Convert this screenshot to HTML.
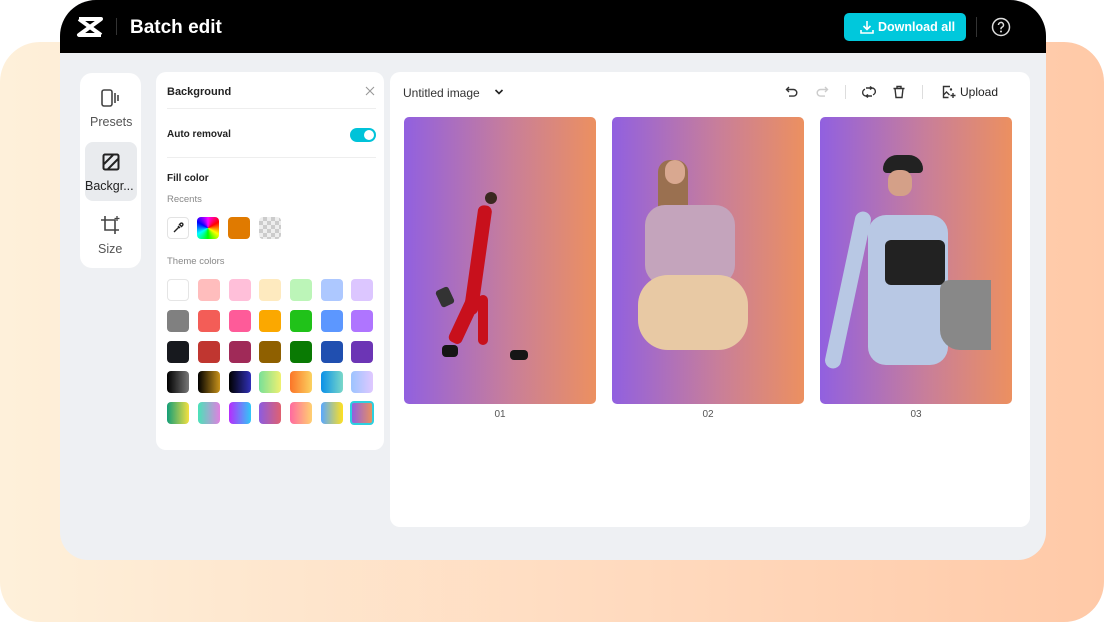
<!DOCTYPE html><html><head><meta charset="utf-8"><style>
*{margin:0;padding:0;box-sizing:border-box}
body{width:1104px;height:622px;background:#fff;position:relative;overflow:hidden;font-family:"Liberation Sans",sans-serif}
.bg{position:absolute;left:0;top:42px;width:1104px;height:580px;border-radius:40px;background:linear-gradient(90deg,#fef0da,#ffd9bd 60%,#ffc9a7)}
.win{position:absolute;left:60px;top:0;width:986px;height:560px;border-radius:36px 36px 28px 28px;background:#eef0f3;overflow:hidden}
.hd{position:absolute;left:0;top:0;width:986px;height:53px;background:#000}
.abs{position:absolute}
.card{position:absolute;background:#fff;border-radius:10px}
.t{position:absolute;white-space:nowrap}
.sw{position:absolute;width:22px;height:22px;border-radius:4px}
.img{position:absolute;top:117px;width:192px;height:287px;border-radius:5px;background:linear-gradient(90deg,#9160e0,#c87e9a 55%,#ec9060)}
.lab{position:absolute;top:409px;font-size:10px;color:#555;width:192px;text-align:center}
</style></head><body>
<div class="bg"></div>
<div class="win">
 <div class="hd">
  <svg class="abs" style="left:16px;top:16px" width="28" height="22" viewBox="0 0 28 22"><path d="M3 3h22L3 19h22" fill="none" stroke="#fff" stroke-width="4" stroke-linejoin="round"/><path d="M3 3l22 16" stroke="#fff" stroke-width="4"/></svg>
  <div class="abs" style="left:56px;top:18px;width:1px;height:17px;background:#333"></div>
  <div class="t" style="left:70px;top:17px;color:#fff;font-size:19px;font-weight:bold">Batch edit</div>
  <div class="abs" style="left:784px;top:13px;width:122px;height:28px;border-radius:5px;background:#00c8dc"></div>
  <svg class="abs" style="left:800px;top:20px" width="14" height="14" viewBox="0 0 14 14"><path d="M7 1v8M3.5 6L7 9.5 10.5 6M1 10v3h12v-3" fill="none" stroke="#fff" stroke-width="1.6"/></svg>
  <div class="t" style="left:818px;top:20px;color:#fff;font-size:12.5px;font-weight:bold">Download all</div>
  <div class="abs" style="left:916px;top:17px;width:1px;height:20px;background:#333"></div>
  <svg class="abs" style="left:931px;top:17px" width="20" height="20" viewBox="0 0 20 20"><circle cx="10" cy="10" r="8.5" fill="none" stroke="#ddd" stroke-width="1.5"/><path d="M7.5 8a2.5 2.5 0 1 1 3.3 2.3c-.6.3-.8.7-.8 1.4v.6" fill="none" stroke="#ddd" stroke-width="1.5"/><circle cx="10" cy="14.5" r="1" fill="#ddd"/></svg>
 </div>
 <div class="card" style="left:20px;top:73px;width:61px;height:195px;border-radius:12px"></div>
 <div class="abs" style="left:25px;top:142px;width:52px;height:59px;border-radius:8px;background:#e9ebee"></div>
 <svg class="abs" style="left:40px;top:88px" width="22" height="20" viewBox="0 0 22 20"><rect x="2" y="2" width="10" height="16" rx="2" fill="none" stroke="#444" stroke-width="1.6"/><path d="M15 5v10M18 7v6" stroke="#444" stroke-width="1.6"/></svg>
 <div class="t" style="left:30px;top:115px;font-size:12.5px;color:#555">Presets</div>
 <svg class="abs" style="left:42px;top:153px" width="18" height="18" viewBox="0 0 18 18"><rect x="1.5" y="1.5" width="15" height="15" rx="1.5" fill="none" stroke="#222" stroke-width="2"/><path d="M2 11L11 2M6 16L16 6" stroke="#222" stroke-width="2"/></svg>
 <div class="t" style="left:25px;top:179px;font-size:12.5px;color:#222">Backgr...</div>
 <svg class="abs" style="left:40px;top:215px" width="22" height="20" viewBox="0 0 22 20"><path d="M5 1v14h14M1 5h14v14" fill="none" stroke="#444" stroke-width="1.6"/><path d="M17 1v5M14.5 3.5h5" stroke="#444" stroke-width="1.3"/></svg>
 <div class="t" style="left:38px;top:242px;font-size:12.5px;color:#555">Size</div>
 <div class="card" style="left:96px;top:72px;width:228px;height:378px"></div>
 <div class="t" style="left:107px;top:86px;font-size:11px;font-weight:bold;color:#222">Background</div>
 <svg class="abs" style="left:305px;top:86px" width="10" height="10" viewBox="0 0 10 10"><path d="M1 1l8 8M9 1L1 9" stroke="#999" stroke-width="1.1"/></svg>
 <div class="abs" style="left:107px;top:108px;width:209px;height:1px;background:#eee"></div>
 <div class="t" style="left:107px;top:129px;font-size:10px;font-weight:bold;color:#222">Auto removal</div>
 <div class="abs" style="left:290px;top:128px;width:26px;height:14px;border-radius:7px;background:#00c3d9"></div>
 <div class="abs" style="left:304px;top:130px;width:10px;height:10px;border-radius:5px;background:#fff"></div>
 <div class="abs" style="left:107px;top:157px;width:209px;height:1px;background:#eee"></div>
 <div class="t" style="left:107px;top:173px;font-size:10px;font-weight:bold;color:#222">Fill color</div>
 <div class="t" style="left:107px;top:194px;font-size:9.5px;color:#888">Recents</div>
 <div class="sw" style="left:107px;top:217px;border:1px solid #e3e3e3;background:#fff"></div>
 <svg class="abs" style="left:112px;top:222px" width="12" height="12" viewBox="0 0 12 12"><path d="M2 10l5-5M6 4l2 2M7.5 2.5l2 2 1-1a1.4 1.4 0 0 0-2-2z" fill="none" stroke="#222" stroke-width="1.4"/></svg>
 <div class="sw" style="left:137px;top:217px;background:conic-gradient(#f0f,#f00,#ff0,#0f0,#0ff,#00f,#f0f)"></div>
 <div class="sw" style="left:168px;top:217px;background:#e07a00"></div>
 <div class="sw" style="left:199px;top:217px;background:repeating-conic-gradient(#ccc 0 25%,#eee 0 50%) 0 0/8px 8px"></div>
 <div class="t" style="left:107px;top:256px;font-size:9.5px;color:#888">Theme colors</div>
 <div class="sw" style="left:107px;top:279px;background:#fff;border:1px solid #e5e5e5"></div>
 <div class="sw" style="left:138px;top:279px;background:#ffbdbd"></div>
 <div class="sw" style="left:169px;top:279px;background:#ffbfd9"></div>
 <div class="sw" style="left:199px;top:279px;background:#feeabf"></div>
 <div class="sw" style="left:230px;top:279px;background:#bcf5b8"></div>
 <div class="sw" style="left:261px;top:279px;background:#adc8ff"></div>
 <div class="sw" style="left:291px;top:279px;background:#dcc6ff"></div>
 <div class="sw" style="left:107px;top:310px;background:#808080"></div>
 <div class="sw" style="left:138px;top:310px;background:#f35d57"></div>
 <div class="sw" style="left:169px;top:310px;background:#fe5b99"></div>
 <div class="sw" style="left:199px;top:310px;background:#fba800"></div>
 <div class="sw" style="left:230px;top:310px;background:#20c219"></div>
 <div class="sw" style="left:261px;top:310px;background:#5c97ff"></div>
 <div class="sw" style="left:291px;top:310px;background:#af75ff"></div>
 <div class="sw" style="left:107px;top:341px;background:#17191e"></div>
 <div class="sw" style="left:138px;top:341px;background:#c03630"></div>
 <div class="sw" style="left:169px;top:341px;background:#a02a58"></div>
 <div class="sw" style="left:199px;top:341px;background:#8f6000"></div>
 <div class="sw" style="left:230px;top:341px;background:#097a03"></div>
 <div class="sw" style="left:261px;top:341px;background:#204fb0"></div>
 <div class="sw" style="left:291px;top:341px;background:#6c35b5"></div>
 <div class="sw" style="left:107px;top:371px;background:linear-gradient(90deg,#000,#777)"></div>
 <div class="sw" style="left:138px;top:371px;background:linear-gradient(90deg,#000,#c8921a)"></div>
 <div class="sw" style="left:169px;top:371px;background:linear-gradient(90deg,#000,#3030b8)"></div>
 <div class="sw" style="left:199px;top:371px;background:linear-gradient(90deg,#78e098,#f0f070)"></div>
 <div class="sw" style="left:230px;top:371px;background:linear-gradient(90deg,#fb7528,#fbd260)"></div>
 <div class="sw" style="left:261px;top:371px;background:linear-gradient(90deg,#0a90e8,#7ad8c8)"></div>
 <div class="sw" style="left:291px;top:371px;background:linear-gradient(90deg,#9cc4ff,#e0c8ff)"></div>
 <div class="sw" style="left:107px;top:402px;background:linear-gradient(90deg,#149e78,#f4e040)"></div>
 <div class="sw" style="left:138px;top:402px;background:linear-gradient(90deg,#4ae2b8,#e080e0)"></div>
 <div class="sw" style="left:169px;top:402px;background:linear-gradient(90deg,#b62cfc,#30c8f8)"></div>
 <div class="sw" style="left:199px;top:402px;background:linear-gradient(90deg,#8c5ce0,#e06070)"></div>
 <div class="sw" style="left:230px;top:402px;background:linear-gradient(90deg,#ff6aa0,#ffd070)"></div>
 <div class="sw" style="left:261px;top:402px;background:linear-gradient(90deg,#58a8ff,#ffe020)"></div>
 <div class="sw" style="left:290px;top:401px;width:24px;height:24px;border:2px solid #2cd0e0;background:linear-gradient(90deg,#9060e0,#e89060)"></div>
 <div class="card" style="left:330px;top:72px;width:640px;height:455px"></div>
 <div class="t" style="left:343px;top:86px;font-size:12px;color:#333">Untitled image</div>
 <svg class="abs" style="left:434px;top:88px" width="10" height="8" viewBox="0 0 10 8"><path d="M1.5 2l3.5 3.5L8.5 2" fill="none" stroke="#222" stroke-width="1.6"/></svg>
 <svg class="abs" style="left:725px;top:85px" width="14" height="14" viewBox="0 0 14 14"><path d="M4 2L1.5 4.5 4 7M1.5 4.5h7a3.3 3.3 0 0 1 0 6.6H4" fill="none" stroke="#333" stroke-width="1.4"/></svg>
 <svg class="abs" style="left:755px;top:85px" width="14" height="14" viewBox="0 0 14 14"><path d="M10 2l2.5 2.5L10 7M12.5 4.5h-7a3.3 3.3 0 0 0 0 6.6H10" fill="none" stroke="#ccc" stroke-width="1.4"/></svg>
 <div class="abs" style="left:785px;top:85px;width:1px;height:14px;background:#ddd"></div>
 <svg class="abs" style="left:801px;top:85px" width="16" height="14" viewBox="0 0 16 14"><path d="M5 3h6a3.5 3.5 0 0 1 1 6.8M11 11H5a3.5 3.5 0 0 1-1-6.8M9 1.5l2 1.5-2 1.5M7 9.5L5 11l2 1.5" fill="none" stroke="#333" stroke-width="1.4"/></svg>
 <svg class="abs" style="left:832px;top:85px" width="14" height="14" viewBox="0 0 14 14"><path d="M1.5 3.5h11M5 3.5V1.5h4v2M3 3.5l1 9h6l1-9" fill="none" stroke="#333" stroke-width="1.4"/></svg>
 <div class="abs" style="left:862px;top:85px;width:1px;height:14px;background:#ddd"></div>
 <svg class="abs" style="left:882px;top:85px" width="14" height="14" viewBox="0 0 14 14"><path d="M8 1.5H1.5v11h5M1.5 10l3-3 3 3" fill="none" stroke="#333" stroke-width="1.4"/><path d="M11 8v5M8.5 10.5h5" stroke="#333" stroke-width="1.4"/><circle cx="9" cy="4.5" r="1.2" fill="#333"/></svg>
 <div class="t" style="left:900px;top:85px;font-size:12px;color:#222">Upload</div>
 <div class="img" style="left:344px"></div>
 <div class="img" style="left:552px"></div>
 <div class="img" style="left:760px"></div>
 <div class="abs" style="left:425px;top:192px;width:12px;height:12px;border-radius:6px;background:#3a2820"></div>
 <div class="abs" style="left:411px;top:205px;width:14px;height:110px;background:#c8101c;border-radius:6px;transform:rotate(8deg)"></div>
 <div class="abs" style="left:397px;top:295px;width:14px;height:50px;background:#c8101c;border-radius:5px;transform:rotate(25deg)"></div>
 <div class="abs" style="left:418px;top:295px;width:10px;height:50px;background:#c8101c;border-radius:5px"></div>
 <div class="abs" style="left:378px;top:288px;width:14px;height:18px;background:#333;border-radius:3px;transform:rotate(-25deg)"></div>
 <div class="abs" style="left:382px;top:345px;width:16px;height:12px;background:#151515;border-radius:4px"></div>
 <div class="abs" style="left:450px;top:350px;width:18px;height:10px;background:#151515;border-radius:4px"></div>
 <div class="abs" style="left:598px;top:160px;width:30px;height:130px;background:#9a7050;border-radius:12px"></div>
 <div class="abs" style="left:585px;top:205px;width:90px;height:80px;background:#c4a4bc;border-radius:20px"></div>
 <div class="abs" style="left:578px;top:275px;width:110px;height:75px;background:#e8c9a4;border-radius:30px"></div>
 <div class="abs" style="left:605px;top:160px;width:20px;height:24px;background:#d9a890;border-radius:10px"></div>
 <div class="abs" style="left:823px;top:155px;width:40px;height:18px;background:#222;border-radius:14px 14px 4px 4px"></div>
 <div class="abs" style="left:828px;top:170px;width:24px;height:26px;background:#d4a088;border-radius:10px"></div>
 <div class="abs" style="left:808px;top:215px;width:80px;height:150px;background:#b8c8e4;border-radius:18px"></div>
 <div class="abs" style="left:825px;top:240px;width:60px;height:45px;background:#222;border-radius:6px"></div>
 <div class="abs" style="left:880px;top:280px;width:51px;height:70px;background:#888;border-radius:10px 0 0 20px"></div>
 <div class="abs" style="left:780px;top:210px;width:16px;height:160px;background:#b8c8e4;border-radius:8px;transform:rotate(12deg)"></div>
 <div class="lab" style="left:344px">01</div>
 <div class="lab" style="left:552px">02</div>
 <div class="lab" style="left:760px">03</div>
</div>
</body></html>
